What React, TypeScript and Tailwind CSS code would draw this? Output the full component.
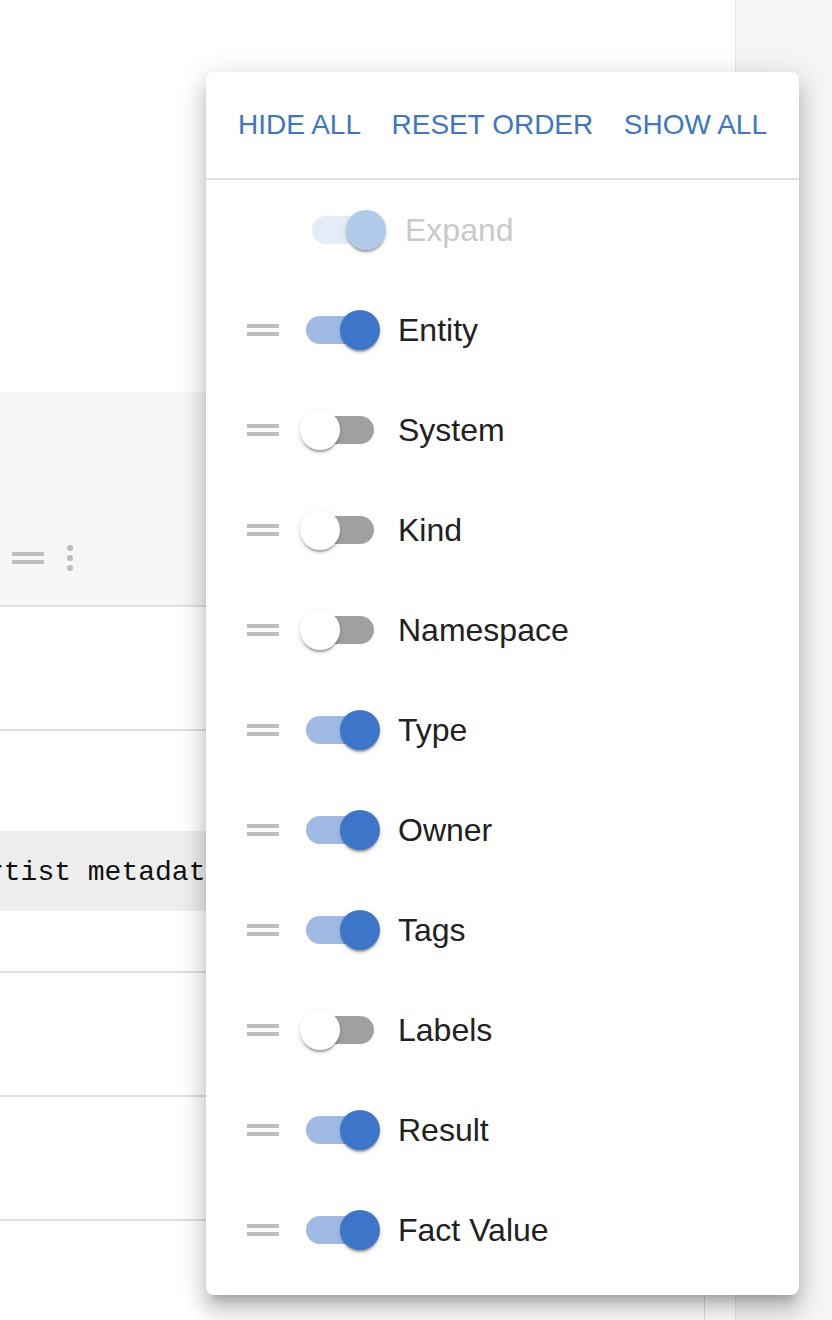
import React from 'react';

type Column = {
  label: string;
  checked: boolean;
};

const columns: Column[] = [
  { label: 'Entity', checked: true },
  { label: 'System', checked: false },
  { label: 'Kind', checked: false },
  { label: 'Namespace', checked: false },
  { label: 'Type', checked: true },
  { label: 'Owner', checked: true },
  { label: 'Tags', checked: true },
  { label: 'Labels', checked: false },
  { label: 'Result', checked: true },
  { label: 'Fact Value', checked: true },
];

function DragHandle() {
  return (
    <div className="flex flex-col gap-[4px] w-[32px] flex-shrink-0">
      <div className="h-[4px] w-full bg-[#bdbdbd]"></div>
      <div className="h-[4px] w-full bg-[#bdbdbd]"></div>
    </div>
  );
}

function Switch({ checked, disabled }: { checked: boolean; disabled?: boolean }) {
  // track colour / thumb colour depend on state
  const track = disabled ? 'bg-[#e6ecf7]' : checked ? 'bg-[#9fbae3]' : 'bg-[#a1a1a1]';
  const thumb = disabled ? 'bg-[#b3cbeb]' : checked ? 'bg-[#3d76c9]' : 'bg-white';
  return (
    <div className="relative w-[80px] h-[40px] flex-shrink-0">
      <div className={`absolute left-[6px] top-[6px] w-[68px] h-[28px] rounded-full ${track}`}></div>
      <div
        className={`absolute top-0 w-[40px] h-[40px] rounded-full shadow-[0_4px_2px_-2px_rgba(0,0,0,0.2),0_2px_2px_0_rgba(0,0,0,0.14),0_2px_6px_0_rgba(0,0,0,0.12)] ${thumb} ${
          checked ? 'left-[40px]' : 'left-0'
        }`}
      ></div>
    </div>
  );
}

function ColumnMenu() {
  return (
    <div className="absolute left-[206px] top-[72px] w-[593px] h-[1223px] bg-white rounded-[8px] shadow-[0_10px_10px_-6px_rgba(0,0,0,0.2),0_16px_20px_2px_rgba(0,0,0,0.14),0_6px_28px_4px_rgba(0,0,0,0.12)] flex flex-col">
      {/* Actions */}
      <div className="h-[106px] flex items-center justify-between px-[32px] text-[28px] font-medium text-[#3c76c9]">
        <button className="uppercase">HIDE ALL</button>
        <button className="uppercase">RESET ORDER</button>
        <button className="uppercase">SHOW ALL</button>
      </div>
      <div className="h-[2px] w-full bg-[#e0e0e0]"></div>

      <div className="flex flex-col">
        {/* Expand (not draggable) */}
        <div className="h-[100px] flex items-center pl-[100px]">
          <Switch checked disabled />
          <span className="ml-[19px] text-[32px] text-[#c9c9c9]">Expand</span>
        </div>
        {columns.map((col) => (
          <div key={col.label} className="h-[100px] flex items-center pl-[41px]">
            <DragHandle />
            <div className="ml-[21px]">
              <Switch checked={col.checked} />
            </div>
            <span className="ml-[18px] text-[32px] text-[#212121]">{col.label}</span>
          </div>
        ))}
      </div>
    </div>
  );
}

export default function App() {
  return (
    <div className="relative w-[832px] h-[1320px] overflow-hidden flex bg-white font-['Liberation_Sans',Arial,sans-serif]">
      <main className="w-[736px] h-full bg-white border-r border-[#e6e6e6] flex flex-col">
        <div className="h-[392px] flex-shrink-0"></div>
        <div className="w-[705px] flex-1 border-r border-[#dcdcdc] flex flex-col">
          {/* Table header */}
          <div className="h-[215px] bg-[#f6f6f6] border-b-2 border-[#e0e0e0] flex flex-col justify-end">
            <div className="h-[40px] mb-[27px] flex items-center pl-[12px] gap-[23px]">
              <DragHandle />
              <div className="flex flex-col gap-[4px]">
                <div className="w-[6px] h-[6px] rounded-full bg-[#bdbdbd]"></div>
                <div className="w-[6px] h-[6px] rounded-full bg-[#bdbdbd]"></div>
                <div className="w-[6px] h-[6px] rounded-full bg-[#bdbdbd]"></div>
              </div>
            </div>
          </div>
          <div className="h-[124px] border-b-2 border-[#e0e0e0]"></div>
          <div className="h-[242px] border-b-2 border-[#e0e0e0] pt-[100px]">
            <div className="h-[80px] bg-[#eeeeee] flex items-center overflow-hidden whitespace-nowrap">
              <code className="-ml-[13px] mt-[3px] text-[28px] text-[#111] font-['Liberation_Mono','Courier_New',monospace]">
                rtist metadata
              </code>
            </div>
          </div>
          <div className="h-[124px] border-b-2 border-[#e0e0e0]"></div>
          <div className="h-[124px] border-b-2 border-[#e0e0e0]"></div>
          <div className="flex-1"></div>
        </div>
      </main>
      <aside className="flex-1 h-full bg-[#f5f5f5]"></aside>

      <ColumnMenu />
    </div>
  );
}
